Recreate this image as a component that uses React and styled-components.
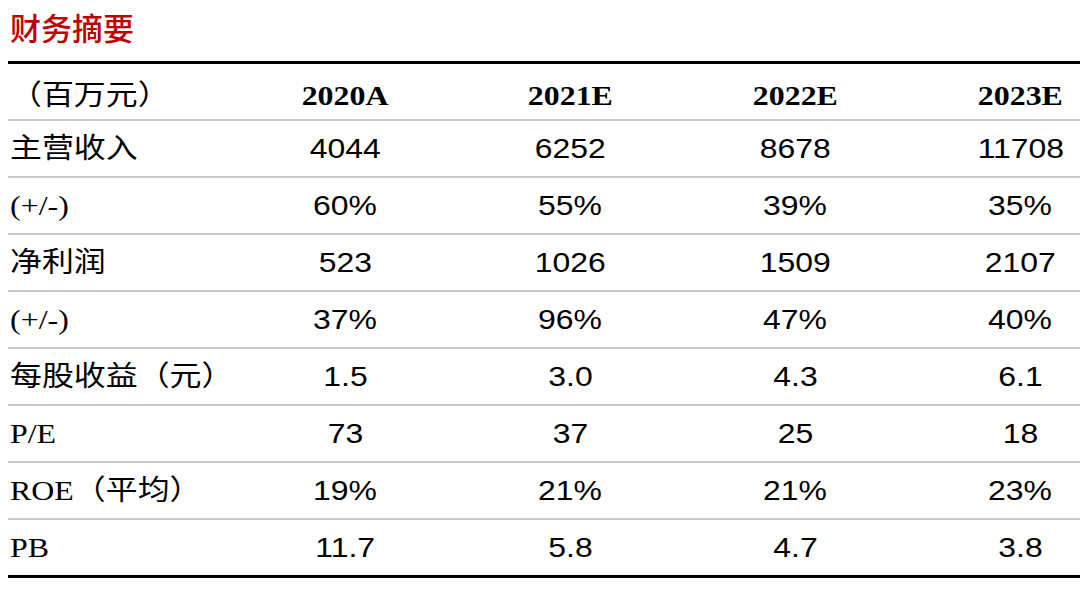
import styled, { createGlobalStyle } from 'styled-components'

const GlobalStyle = createGlobalStyle`
  html,
  body {
    margin: 0;
    padding: 0;
    background: #fff;
    overflow: hidden;
  }
`

const Page = styled.div`
  width: 1080px;
  height: 589px;
  padding-left: 8px;
  box-sizing: border-box;
  overflow: hidden;
`

const Title = styled.h1`
  margin: 0;
  height: 61px;
  padding: 11px 0 0 2px;
  box-sizing: border-box;
  font-family: 'Noto Sans CJK SC', sans-serif;
  font-weight: 500;
  font-size: 31px;
  line-height: 31px;
  color: #c00000;
`

const Table = styled.div`
  width: 1125px;
  border-top: 3px solid #000;
`

const Row = styled.div`
  display: grid;
  grid-template-columns: repeat(5, 225px);
  align-items: center;
  height: ${(props) => (props.$last ? '58px' : '57px')};
  box-sizing: border-box;
  padding-top: ${(props) => (props.$head ? '8px' : '0')};
  border-bottom: ${(props) => (props.$last ? '3px solid #000' : '2px solid #c9c9c9')};
`

const Label = styled.div`
  padding-left: 2px;
  font-family: 'Liberation Serif', 'Noto Sans CJK SC', serif;
  font-weight: 400;
  font-size: 28px;
  line-height: 1;
  color: #000;
  white-space: nowrap;
  span {
    display: inline-block;
    transform: scaleX(1.14);
    transform-origin: left center;
  }
`

const Cell = styled.div`
  text-align: center;
  font-family: ${(props) => (props.$head ? "'Liberation Serif', serif" : "'Liberation Sans', sans-serif")};
  font-weight: ${(props) => (props.$head ? 700 : 400)};
  font-size: 28px;
  line-height: 1;
  color: #000;
  span {
    display: inline-block;
    transform: scaleX(1.14);
  }
`

const years = ['2020A', '2021E', '2022E', '2023E']

const rows = [
  ['主营收入', '4044', '6252', '8678', '11708'],
  ['(+/-)', '60%', '55%', '39%', '35%'],
  ['净利润', '523', '1026', '1509', '2107'],
  ['(+/-)', '37%', '96%', '47%', '40%'],
  ['每股收益（元）', '1.5', '3.0', '4.3', '6.1'],
  ['P/E', '73', '37', '25', '18'],
  ['ROE（平均）', '19%', '21%', '21%', '23%'],
  ['PB', '11.7', '5.8', '4.7', '3.8'],
]

const App = () => {
  return (
    <Page>
      <GlobalStyle />
      <Title>财务摘要</Title>
      <Table>
        <Row $head>
          <Label>
            <span>（百万元）</span>
          </Label>
          {years.map((y) => (
            <Cell $head key={y}>
              <span>{y}</span>
            </Cell>
          ))}
        </Row>
        {rows.map(([label, ...vals], i) => (
          <Row key={i} $last={i === rows.length - 1}>
            <Label>
              <span>{label}</span>
            </Label>
            {vals.map((v, j) => (
              <Cell key={j}>
                <span>{v}</span>
              </Cell>
            ))}
          </Row>
        ))}
      </Table>
    </Page>
  )
}

export default App
